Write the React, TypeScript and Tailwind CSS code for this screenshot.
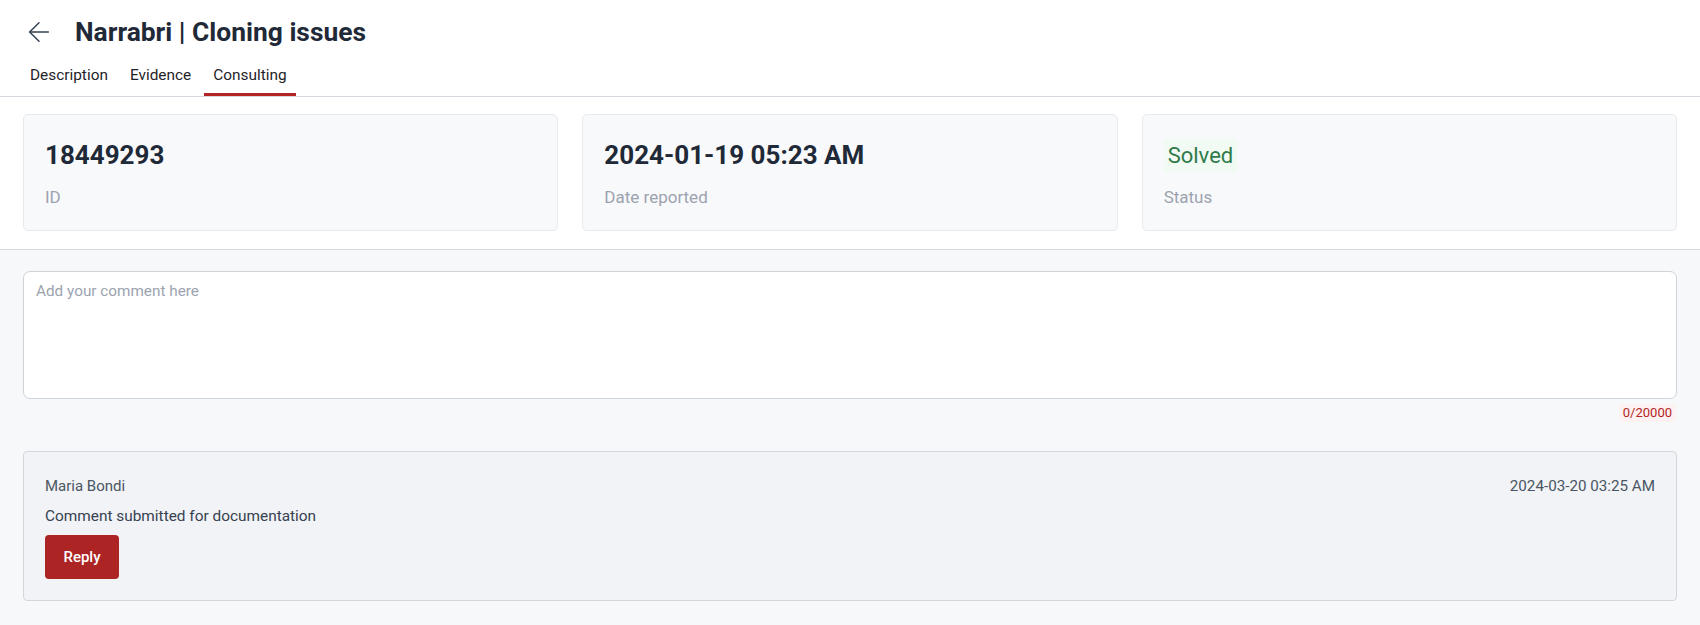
import React, { useState } from 'react';

// ============================================
// Consulting view — single incident page
// ============================================

const font = { fontFamily: 'Roboto, "Noto Sans", Arial, sans-serif' };

const tabs = ['Description', 'Evidence', 'Consulting'];

const BackArrow: React.FC = () => (
  <svg width="32" height="32" viewBox="0 0 24 24" fill="none" stroke="#374151" strokeWidth="1.1" strokeLinecap="round" strokeLinejoin="round">
    <path d="M19 12H5" />
    <path d="m12 19-7-7 7-7" />
  </svg>
);

const InfoCard: React.FC<{ label: string; children: React.ReactNode }> = ({ label, children }) => (
  <div className="flex flex-col rounded-[5px] border border-[#e8eaee] bg-[#f8f9fb] px-[21px] pt-[24px] pb-[21px]">
    <div className="h-[32px] flex items-center">{children}</div>
    <div className="mt-[14px] text-[17px] leading-[24px] text-[#9ca3af]">{label}</div>
  </div>
);

const App: React.FC = () => {
  const [active, setActive] = useState('Consulting');
  const [comment, setComment] = useState('');

  return (
    <div className="min-h-[625px] flex flex-col bg-[#f7f8fa]" style={font}>
      {/* Header */}
      <div className="bg-white border-b border-[#d5d8de]">
        <div className="flex items-center gap-[20px] pl-[23px] pt-[16px]">
          <BackArrow />
          <h1 className="text-[26.4px] leading-[32px] font-bold text-[#1f2937]">Narrabri | Cloning issues</h1>
        </div>
        <div className="flex gap-[4px] pl-[21px] mt-[17px]">
          {tabs.map((t) => (
            <button
              key={t}
              onClick={() => setActive(t)}
              className={`px-[9px] pb-[8px] text-[15.4px] leading-[20px] text-[#1f2328] border-b-[3px] ${
                active === t ? 'border-[#b42424]' : 'border-transparent'
              }`}
            >
              {t}
            </button>
          ))}
        </div>
      </div>

      {/* Summary cards */}
      <div className="bg-white border-b border-[#d5d8de] px-[23px] pt-[17px] pb-[18px]">
        <div className="grid grid-cols-3 gap-[24px]">
          <InfoCard label="ID">
            <span className="text-[26px] font-bold text-[#1f2937]">18449293</span>
          </InfoCard>
          <InfoCard label="Date reported">
            <span className="text-[26px] font-bold text-[#1f2937]">2024-01-19 05:23 AM</span>
          </InfoCard>
          <InfoCard label="Status">
            <span className="px-[4px] text-[22px] text-[#2f7a4a] bg-[#f2faf4]">Solved</span>
          </InfoCard>
        </div>
      </div>

      {/* Comments */}
      <div className="flex-1 px-[23px] pt-[21px] pb-[25px]">
        <textarea
          value={comment}
          onChange={(e) => setComment(e.target.value)}
          placeholder="Add your comment here"
          className="block w-full h-[128px] resize-none rounded-[7px] border border-[#cfd3da] bg-white px-[12px] py-[9px] text-[15.3px] leading-[20px] text-gray-800 placeholder:text-[#9ca3af] outline-none"
        />
        <div className="flex justify-end mt-[5px] pr-[1px]">
          <span className="rounded-[4px] bg-[#fdf1f1] px-[4px] text-[13px] leading-[18px] text-[#b42424]">
            {comment.length}/20000
          </span>
        </div>

        <div className="mt-[29px] rounded-[4px] border border-[#d3d6dc] bg-[#f1f3f6] px-[21px] pt-[23px] pb-[21px]">
          <div className="flex justify-between text-[15px] leading-[22px] text-[#4b5563]">
            <span>Maria Bondi</span>
            <span className="text-[15.2px]">2024-03-20 03:25 AM</span>
          </div>
          <p className="mt-[8px] text-[15.4px] leading-[22px] text-[#374151]">Comment submitted for documentation</p>
          <button className="mt-[8px] w-[74px] h-[44px] rounded-[4px] bg-[#ad2424] text-[15px] font-medium text-white">
            Reply
          </button>
        </div>
      </div>
    </div>
  );
};

export default App;
